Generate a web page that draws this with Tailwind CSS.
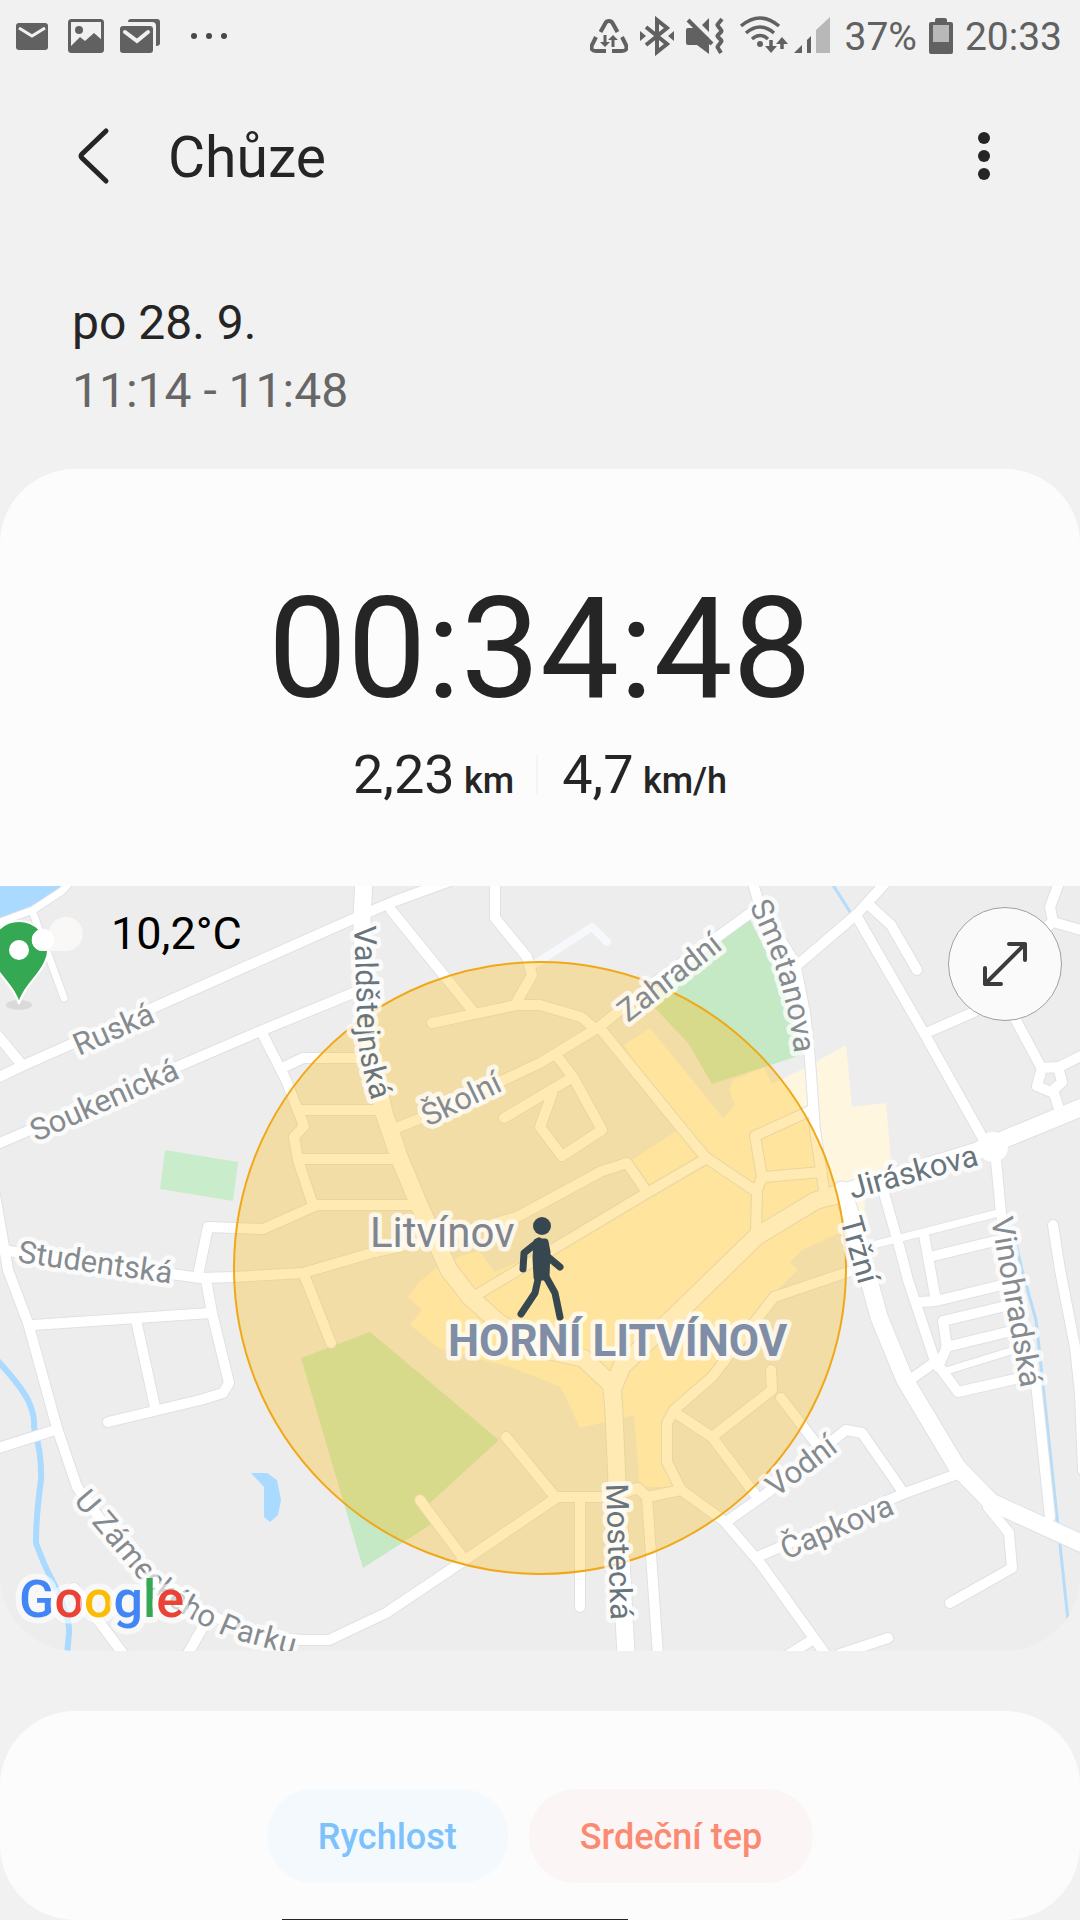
<!DOCTYPE html>
<html lang="cs">
<head>
    <meta charset="UTF-8">
    <meta name="viewport" content="width=device-width, initial-scale=1.0">
    <title>Chůze</title>
    <script src="https://cdn.jsdelivr.net/npm/@tailwindcss/browser@4"></script>
</head>
<body class="bg-[#f1f1f1] font-[Roboto,sans-serif] text-[#252525]">

    <!-- Status bar -->
    <div class="flex h-18 items-center justify-between pl-4 pr-[18px] text-[#616161]">
        <div class="flex items-center">
            <svg class="h-9 w-8" viewBox="0 0 32 36" fill="none">
                <rect y="5" width="32" height="27" rx="3" fill="currentColor"/>
                <path d="M3 10l13 8 13-8" stroke="#f1f1f1" stroke-width="3"/>
            </svg>
            <svg class="ml-5 h-9 w-9" viewBox="0 0 36 36" fill="none">
                <rect x="1.500" y="2.500" width="33" height="31" rx="2" stroke="currentColor" stroke-width="3"/>
                <circle cx="11" cy="12" r="4" fill="currentColor"/>
                <path d="M3 28l9-9 5 4 9-8 8 7v11H3z" fill="currentColor"/>
            </svg>
            <svg class="ml-4 h-9 w-10" viewBox="0 0 40 36" fill="none">
                <path d="M8 4q0-3 3-3h26q3 0 3 3v21q0 3-4 3V8q0-4-4-4z" fill="currentColor"/>
                <rect y="8" width="33" height="27" rx="3" fill="currentColor"/>
                <path d="M5 14l12 9 11-9" stroke="#f1f1f1" stroke-width="4" stroke-linecap="round"/>
            </svg>
            <svg class="ml-[31px] h-9 w-9" viewBox="0 0 36 36" fill="#484848">
                <circle cx="3" cy="18" r="3"/><circle cx="18" cy="18" r="3"/><circle cx="33" cy="18" r="3"/>
            </svg>
        </div>
        <div class="flex items-center text-[39px] leading-10">
            <svg class="h-9 w-[38px]" viewBox="0 0 38 36" fill="none" stroke="currentColor" stroke-width="4">
                <path d="M10.500 14l5-9q1-2 3.500-2t3.500 2l5 9M6 19l-4 8q-2 6 4 6h10M32 19l4 8q2 6-4 6H22"/>
                <path d="M15 17v10M23 19v10" stroke-width="3"/>
                <path d="M10 24h10l-5 5zM18 22h10l-5-5z" fill="currentColor" stroke="none"/>
            </svg>
            <svg class="ml-3 h-10 w-[34px]" viewBox="0 0 34 40" fill="none" stroke="currentColor" stroke-width="4">
                <path d="M6 11l21 17-10 8V4l10 8L6 29"/>
                <path d="M0 15l6 5-6 5zM34 15l-6 5 6 5z" fill="currentColor" stroke="none"/>
            </svg>
            <svg class="ml-3 h-10 w-[38px]" viewBox="0 0 38 40" fill="none" stroke="currentColor">
                <path d="M0 14q0-2 2-2h9l12 10v16L11 29H2q-2 0-2-2zM23 2v14l-7-7z" fill="currentColor" stroke="none"/>
                <path d="M2 4l24 24" stroke-width="4"/>
                <path d="M36 3l-4 5q-1 1 0 2l3 4q1 1 0 2l-3 3q-1 1 0 2l3 3q1 1 0 2l-3 4q-1 1 0 2l3 5" stroke-width="4"/>
            </svg>
            <svg class="ml-4 h-10 w-12" viewBox="0 0 48 40" fill="none" stroke="currentColor" stroke-width="3.500">
                <path d="M1 10q19-16 38 0M6 17q14-12 28 0M12 23q8-7 16 0"/>
                <circle cx="20" cy="28" r="3" fill="currentColor" stroke="none"/>
                <path d="M31 24v10M42 33V23"/>
                <path d="M25 30h12l-6 7zM36 28h12l-6-7z" fill="currentColor" stroke="none"/>
            </svg>
            <svg class="ml-1.5 h-10 w-9" viewBox="0 0 36 40" fill="currentColor">
                <path d="M0 37l8-8v8zM13 24l4-4v17h-4z"/>
                <path d="M22 14L36 1v36H22z" fill="#b8b8b8"/>
            </svg>
            <span class="ml-3.5 pt-0.5">37%</span>
            <svg class="ml-3 h-9 w-6" viewBox="0 0 24 36" fill="currentColor">
                <path d="M6 2q0-2 2-2h8q2 0 2 2v2h4q2 0 2 2v28q0 2-2 2H2q-2 0-2-2V6q0-2 2-2h4z"/>
                <path d="M4 7h16v17H4z" fill="#b8b8b8"/>
            </svg>
            <span class="ml-3 pt-0.5">20:33</span>
        </div>
    </div>

    <!-- App bar -->
    <header class="flex h-42 items-center pl-[75px] pr-[76px]">
        <button type="button" aria-label="Zpět">
            <svg class="h-15 w-9" viewBox="0 0 36 60" fill="none" stroke="currentColor" stroke-width="5" stroke-linecap="round" stroke-linejoin="round">
                <path d="M31 5L7 28q-2 2 0 4l24 23"/>
            </svg>
        </button>
        <h1 class="ml-[57px] pt-1 text-[57px] leading-16">Chůze</h1>
        <button type="button" class="ml-auto" aria-label="Další možnosti">
            <svg class="h-15 w-10" viewBox="0 0 40 60" fill="currentColor">
                <circle cx="20" cy="12" r="6"/><circle cx="20" cy="30" r="6"/><circle cx="20" cy="48" r="6"/>
            </svg>
        </button>
    </header>

    <!-- Date and time range -->
    <div class="px-[72px] pt-[49px] pb-11 text-5xl">
        <p class="leading-[68px]">po 28. 9.</p>
        <p class="leading-[68px] text-[#666]">11:14 - 11:48</p>
    </div>

    <main>
        <!-- Summary -->
        <section class="rounded-t-[75px] bg-[#fcfcfc] pt-[100px] pb-[79px]">
            <p class="text-center text-[141px] leading-40">00:34:48</p>
            <div class="mt-3.5 flex items-center justify-center text-[54px] leading-16">
                <p>2,23 <span class="-ml-1 text-4xl font-medium">km</span></p>
                <div class="mr-6 ml-5.5 h-10 w-0.5 bg-[#f5f5f5]"></div>
                <p>4,7 <span class="-ml-1 text-4xl font-medium">km/h</span></p>
            </div>
        </section>

        <!-- Map -->
        <section class="relative overflow-hidden rounded-b-[75px] bg-[#ededed]">
            <svg class="block h-auto w-full" viewBox="0 886 1080 765" fill="none" role="img" aria-label="Mapa Litvínov">
                <defs>
                    <!-- minor streets -->
                    <g id="streets" stroke-linejoin="round" stroke-linecap="round">
                        <path d="M-5 1079L22 1066L362 915L395 901L450 881"/>
                        <path d="M-5 1145L258 1032L358 991"/>
                        <path d="M-5 1032L22 1065"/>
                        <path d="M391 910L472 1010"/>
                        <path d="M432 1023L516 1005L540 1005L581 1017L594 1028"/>
                        <path d="M516 1003L532 975L527 957L495 918V880"/>
                        <path d="M396 1128L424 1117L540 1063L599 1027L654 983L760 906"/>
                        <path d="M504 1118L573 1077M557 1056L573 1077L602 1130L562 1156L540 1127L552 1094"/>
                        <path d="M262 1033L286 1080L304 1126L294 1137L298 1160L313 1205"/>
                        <path d="M282 1068L303 1058H365M298 1110H382M300 1159H399"/>
                        <path d="M198 1275L208 1227L263 1229L317 1205H417"/>
                        <path d="M-5 1248L20 1253L172 1274L200 1278L234 1277L303 1273L375 1252L440 1238L517 1217L602 1171L627 1163L647 1192"/>
                        <path d="M478 1294L540 1257L647 1193L707 1158"/>
                        <path d="M599 1027L705 1157L757 1192L756 1232"/>
                        <path d="M812 1110L755 1136L762 1177L757 1190M764 1177L822 1172"/>
                        <path d="M752 880L760 907L795 963L805 1013L810 1060L815 1130L824 1190"/>
                        <path d="M795 967L857 914L888 880M869 905L891 925L917 970"/>
                        <path d="M857 917L924 1033L985 1142M926 1033L974 1012M985 960L1012 1013L1041 1067"/>
                        <path d="M1042 1068L1058 1067L1062 1082L1051 1092L1037 1086ZM1057 1068L1085 1054M1053 1090L1060 1112"/>
                        <path d="M1060 880L1050 907L1053 922L1085 931M1053 922L1030 940"/>
                        <path d="M995 1150L1001 1213L1015 1303L1036 1383L1050 1517"/>
                        <path d="M1053 1225L1060 1270L1075 1347L1080 1393L1083 1470"/>
                        <path d="M884 1193L901 1253L908 1280L935 1361L958 1392L1020 1378M935 1362L914 1377"/>
                        <path d="M929 1257L995 1241M924 1235L936 1301L920 1302M936 1301L1006 1284"/>
                        <path d="M943 1321L1014 1304M946 1347L1024 1328M943 1321L947 1347L938 1367"/>
                        <path d="M988 1500V1507L1009 1533L1012 1568L950 1603"/>
                        <path d="M960 1473L905 1493L757 1557M726 1522L767 1493L846 1430L862 1433L903 1492M815 1442L781 1398"/>
                        <path d="M681 1490L724 1521L760 1563L826 1655M812 1640L788 1655M888 1638L840 1654"/>
                        <path d="M612 1497L638 1488L647 1497L681 1490L667 1462V1423L674 1410L712 1377L774 1297L848 1272M647 1497L658 1655"/>
                        <path d="M557 1497H617M580 1500V1607"/>
                        <path d="M674 1412L712 1437L757 1497M712 1437L772 1390L771 1370"/>
                        <path d="M506 1437L556 1498L465 1560L386 1613L329 1640H300M420 1500L463 1558"/>
                        <path d="M-5 1195L8 1270L28 1323L57 1428L77 1487L103 1523L148 1577L207 1613L258 1637L303 1640"/>
                        <path d="M-5 1449L55 1430M33 1325L210 1313M206 1280L212 1313L229 1383L223 1393L200 1400L108 1422M136 1320L155 1407"/>
                        <path d="M305 1277L331 1343M74 1588L124 1655M207 1620L187 1655"/>
                    </g>
                    <!-- narrow lanes -->
                    <g id="lanes" stroke-linejoin="round" stroke-linecap="round">
                        <path d="M-5 924L33 910L62 891L72 880M33 913L64 998"/>
                        <path d="M877 1244L998 1213M946 1371L1014 1350"/>
                    </g>
                    <!-- main roads -->
                    <g id="roads" stroke-linejoin="round" stroke-linecap="round">
                        <path d="M364 880L362 917L363 1013L374 1067L384 1113L399 1157L420 1207L449 1270L470 1297L499 1323L545 1350L583 1358L612 1385L614 1413L617 1483L626 1655"/>
                        <path d="M612 1390L622 1366L678 1313L757 1236L815 1201L840 1193"/>
                        <path d="M830 1197L860 1187L977 1151L995 1143L1085 1106"/>
                        <path d="M842 1190L850 1213L869 1280L879 1317L905 1380L957 1467L991 1502L1085 1545"/>
                    </g>
                </defs>

                <!-- land use -->
                <path d="M624 1045L650 1028L723 1118L735 1105L729 1090L733 1080L764 1067L772 1084L805 1068L846 1045L852 1107L886 1103L891 1160L864 1187L865 1213L846 1230L802 1250L790 1262L798 1270L774 1293L712 1373L667 1410L662 1463L674 1487H640L634 1415L580 1428L561 1387L510 1367L440 1349L410 1325L422 1310L408 1297L418 1283L434 1270L458 1257L482 1250L496 1270L540 1253L647 1190L629 1162L678 1130Z" fill="#fef6df"/>
                <g fill="#c5e8c5">
                    <path d="M750 920L781 980L803 1053L795 1057L712 1084L688 1043L654 1007L654 985Z"/>
                    <path d="M165 1150L238 1162L233 1201L160 1189Z" fill="#c9edcb"/>
                    <path d="M370 1332L499 1440L430 1503V1525L363 1568L301 1358Z"/>
                </g>
                <path d="M495 1272L540 1253L647 1193L629 1164L540 1210L470 1240Z" fill="#ededed"/>

                <!-- water -->
                <path d="M0 886H62L50 896L28 908L7 917L0 918Z" fill="#aadaff"/>
                <path d="M251 1473H267L277 1480L281 1500L278 1515L270 1522L264 1517V1487Z" fill="#aadaff"/>
                <path d="M-3 1360Q20 1385 28 1400Q35 1415 34 1427Q42 1455 41 1480Q36 1515 36 1543Q44 1565 52 1580Q70 1615 69 1633L67 1655" stroke="#aadaff" stroke-width="6"/>
                <path d="M831 882L852 915M1014 1235L1022 1270L1036 1320L1046 1413L1068 1620" stroke="#b5dcf8" stroke-width="3"/>

                <!-- casings first, then the road surfaces -->
                <use href="#lanes" stroke="#dfe1e5" stroke-width="9"/>
                <use href="#streets" stroke="#dfe1e5" stroke-width="12"/>
                <use href="#roads" stroke="#dfe1e5" stroke-width="19"/>
                <path d="M532 966L592 927L607 942" stroke="#f7f8fb" stroke-width="8" stroke-linecap="round" stroke-linejoin="round"/>
                <use href="#lanes" stroke="#fff" stroke-width="7"/>
                <use href="#streets" stroke="#fff" stroke-width="10"/>
                <use href="#roads" stroke="#fff" stroke-width="17"/>
                <circle cx="993" cy="1147" r="15" fill="#fff"/>

                <!-- accuracy circle -->
                <circle cx="540" cy="1268" r="306" fill="#ffbb0a" fill-opacity=".31" stroke="#f0a818" stroke-width="2"/>

                <!-- street names -->
                <path id="valdstejnska" d="M354 926L358 1040Q361 1070 378 1120"/>
                <path id="smetanova" d="M749 906Q789 980 796 1070"/>
                <path id="zameckeho" d="M73 1501L140 1580Q172 1614 230 1638L340 1668"/>
                <g class="fill-[#868b8f] stroke-white/75 text-[31px] [paint-order:stroke]" stroke-width="9" stroke-linejoin="round">
                    <text transform="translate(79 1056) rotate(-24)">Ruská</text>
                    <text transform="translate(36 1142) rotate(-24)">Soukenická</text>
                    <text transform="translate(17 1262) rotate(8)">Studentská</text>
                    <text transform="translate(428 1127) rotate(-26)">Školní</text>
                    <text transform="translate(628 1023) rotate(-38)">Zahradní</text>
                    <text transform="translate(991 1219) rotate(80)">Vinohradská</text>
                    <text transform="translate(776 1498) rotate(-37)">Vodní</text>
                    <text transform="translate(786 1560) rotate(-23)">Čapkova</text>
                    <text><textPath href="#smetanova">Smetanova</textPath></text>
                    <text><textPath href="#zameckeho">U Zámeckého Parku</textPath></text>
                </g>
                <g class="fill-[#68757d] stroke-white/75 text-[31px] [paint-order:stroke]" stroke-width="9" stroke-linejoin="round">
                    <text><textPath href="#valdstejnska">Valdštejnská</textPath></text>
                    <text transform="translate(852 1199) rotate(-15)">Jiráskova</text>
                    <text transform="translate(840 1220) rotate(74)">Tržní</text>
                    <text transform="translate(606 1484) rotate(88)">Mostecká</text>
                </g>

                <!-- town names -->
                <g class="stroke-white/75 [paint-order:stroke]" stroke-width="9" stroke-linejoin="round">
                    <text x="370" y="1247" class="fill-[#80858f] text-[42px]">Litvínov</text>
                    <text x="448" y="1356" class="fill-[#7f8ea6] text-[44px] font-bold">HORNÍ LITVÍNOV</text>
                </g>

                <!-- walking person -->
                <g stroke-linecap="round" stroke-linejoin="round" stroke="#37474f" stroke-width="7">
                    <circle cx="542" cy="1226" r="9" fill="#37474f" stroke="none"/>
                    <path d="M539 1241L524 1253L523 1269M548 1257L560 1267"/>
                    <path d="M539 1275L535 1293L521 1314M545 1275L555 1293L560 1317"/>
                    <path d="M537 1242H545L547 1252L546 1277H537L536 1258Z" fill="#37474f"/>
                </g>

                <!-- start pin -->
                <ellipse cx="19" cy="1005" rx="13" ry="5" fill="#000" fill-opacity=".08"/>
                <path d="M19 1004C15 985 -10 970 -10 950A29 29 0 0 1 48 950C48 970 23 985 19 1004Z" fill="#34a853" stroke="#fff" stroke-width="2"/>
                <circle cx="19" cy="950" r="10" fill="#fff"/>

                <!-- cloud -->
                <path d="M43 951A11 11 0 1 1 49 931A17 17 0 1 1 66 951Z" fill="#f9f8f6"/>
                <circle cx="43" cy="940" r="11" fill="#fff"/>

                <text x="19" y="1617" class="stroke-white/60 text-[52px] font-medium [paint-order:stroke]" stroke-width="12" stroke-linejoin="round"><tspan fill="#4285f4">G</tspan><tspan fill="#ea4335">o</tspan><tspan fill="#fbbc05">o</tspan><tspan fill="#4285f4">g</tspan><tspan fill="#34a853">l</tspan><tspan fill="#ea4335">e</tspan></text>
            </svg>

            <p class="absolute top-5 left-[111px] text-[45px] leading-14 text-black">10,2°C</p>
            <button type="button" class="absolute top-[21px] right-[18px] flex size-[114px] items-center justify-center rounded-full border border-[#a0a0a0] bg-[#fafafa]" aria-label="Zvětšit mapu">
                <svg class="size-12" viewBox="0 0 48 48" fill="none" stroke="#3c3c3c" stroke-width="4" stroke-linecap="round" stroke-linejoin="round">
                    <path d="M4 44L44 4M28 4h16v16M4 28v16h16"/>
                </svg>
            </button>
        </section>

        <!-- Charts -->
        <section class="relative mt-15 flex justify-center gap-[21px] overflow-hidden rounded-[75px] bg-[#fcfcfc] pt-[78px] pb-[37px] text-4xl font-medium">
            <button type="button" class="h-[94px] rounded-full bg-[#f4f9fd] px-[51px] pt-0.5 text-[#7dc2fb]">Rychlost</button>
            <button type="button" class="h-[94px] rounded-full bg-[#fbf5f5] px-[51px] pt-0.5 text-[#fa8a72]">Srdeční tep</button>
            <div class="absolute bottom-0 left-[282px] h-px w-[346px] bg-[#252525]"></div>
        </section>
    </main>

</body>
</html>
